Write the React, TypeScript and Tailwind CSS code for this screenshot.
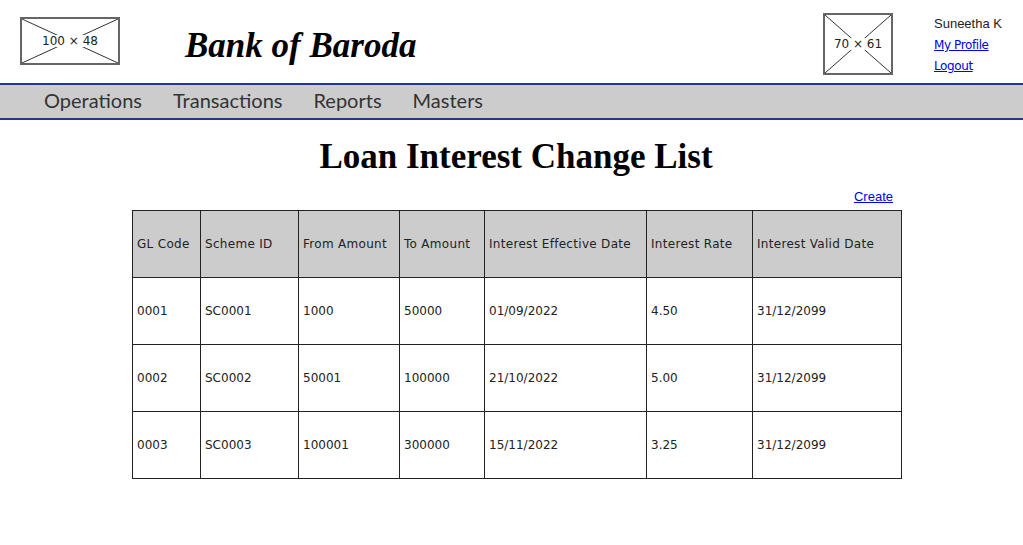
import React from "react";

function Placeholder({ w, h, label }: { w: number; h: number; label: string }) {
  return (
    <div className="relative border-2 border-[#666] bg-white shrink-0" style={{ width: w, height: h }}>
      <svg className="absolute inset-0 w-full h-full" viewBox={`0 0 ${w - 4} ${h - 4}`} preserveAspectRatio="none">
        <line x1="0" y1="0" x2={w - 4} y2={h - 4} stroke="#333" strokeWidth="1" />
        <line x1={w - 4} y1="0" x2="0" y2={h - 4} stroke="#333" strokeWidth="1" />
      </svg>
      <div className="absolute inset-0 flex items-center justify-center">
        <span className="bg-white px-[1px] text-[12px] leading-none text-[#222] font-['DejaVu_Sans',sans-serif]">{label}</span>
      </div>
    </div>
  );
}

const headers = [
  "GL Code",
  "Scheme ID",
  "From Amount",
  "To Amount",
  "Interest Effective Date",
  "Interest Rate",
  "Interest Valid Date",
];
const widths = [68, 98, 101, 85, 162, 106, 149];
const rows = [
  ["0001", "SC0001", "1000", "50000", "01/09/2022", "4.50", "31/12/2099"],
  ["0002", "SC0002", "50001", "100000", "21/10/2022", "5.00", "31/12/2099"],
  ["0003", "SC0003", "100001", "300000", "15/11/2022", "3.25", "31/12/2099"],
];

export default function App() {
  return (
    <div className="w-[1023px] h-[545px] bg-white overflow-hidden">
      <header className="flex items-start h-[83px]">
        <div className="ml-[20px] mt-[17px]">
          <Placeholder w={100} h={48} label="100 × 48" />
        </div>
        <div className="ml-[65px] mt-[26px] text-[35px] leading-[40px] font-bold italic text-black font-['Liberation_Serif',serif]">
          Bank of Baroda
        </div>
        <div className="ml-auto mt-[13px]">
          <Placeholder w={70} h={62} label="70 × 61" />
        </div>
        <div className="ml-[41px] mr-[9px] w-[80px] mt-[15px] flex flex-col font-['Liberation_Sans',sans-serif]">
          <span className="text-[13px] leading-[17px] text-[#222] whitespace-nowrap">Suneetha K</span>
          <a className="mt-[5px] text-[12px] leading-[16px] text-[#0000ee] underline font-['DejaVu_Sans',sans-serif] tracking-[-0.4px] whitespace-nowrap">My Profile</a>
          <a className="mt-[5px] text-[12px] leading-[16px] text-[#0000ee] underline font-['DejaVu_Sans',sans-serif] tracking-[-0.4px] whitespace-nowrap">Logout</a>
        </div>
      </header>
      <nav className="h-[37px] bg-[#cccccc] border-y-2 border-[#1f3a8a] flex items-center pl-[44px] pb-[4px] gap-[31px] text-[20px] text-[#333] font-['Lato',sans-serif]">
        <span>Operations</span>
        <span>Transactions</span>
        <span>Reports</span>
        <span>Masters</span>
      </nav>
      <h1 className="mt-[17px] pl-[9px] text-center text-[35px] leading-[40px] font-bold text-black font-['Liberation_Serif',serif]">
        Loan Interest Change List
      </h1>
      <div className="w-[769px] ml-[132px]">
        <div className="flex justify-end mt-[12px] pr-[8px]">
          <a className="text-[13px] leading-[16px] text-[#0000ee] underline font-['Liberation_Sans',sans-serif]">Create</a>
        </div>
        <table className="mt-[5px] border-collapse table-fixed w-[770px] font-['DejaVu_Sans',sans-serif] text-[12px] text-[#222]">
          <colgroup>
            {widths.map((w, i) => (
              <col key={i} style={{ width: w }} />
            ))}
          </colgroup>
          <thead>
            <tr className="h-[67px] bg-[#cccccc]">
              {headers.map((h) => (
                <th key={h} className="border-[1.5px] border-[#222] text-left font-normal px-[4px] tracking-[0.3px] whitespace-nowrap">
                  {h}
                </th>
              ))}
            </tr>
          </thead>
          <tbody>
            {rows.map((r, ri) => (
              <tr key={ri} className="h-[67px]">
                {r.map((c, ci) => (
                  <td key={ci} className="border-[1.5px] border-[#222] px-[4px]">
                    {c}
                  </td>
                ))}
              </tr>
            ))}
          </tbody>
        </table>
      </div>
    </div>
  );
}
